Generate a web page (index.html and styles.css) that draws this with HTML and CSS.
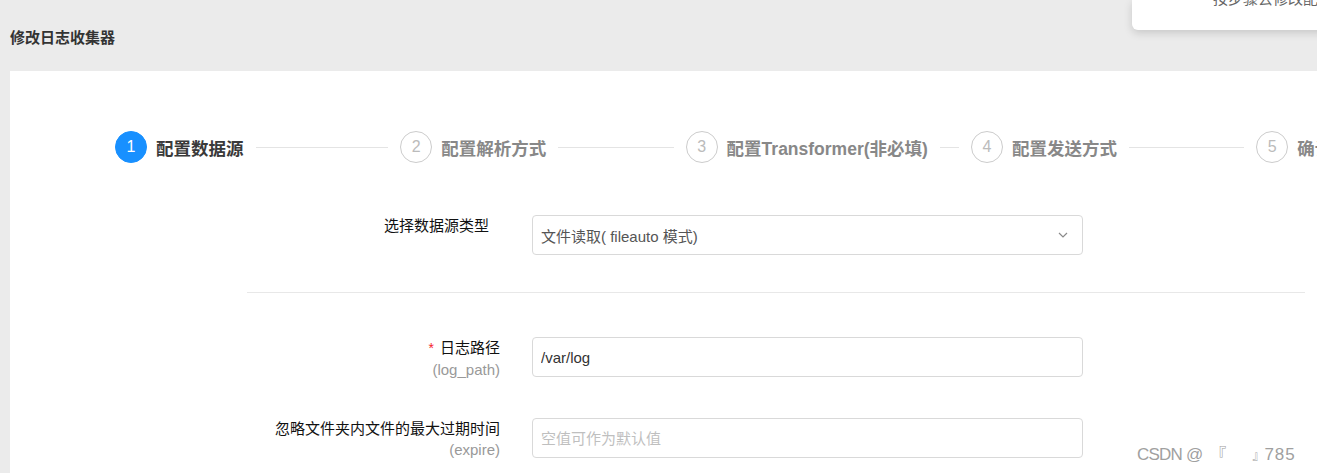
FILE: index.html
```html
<!DOCTYPE html>
<html lang="zh">
<head>
    <meta charset="UTF-8">
    <title>修改日志收集器</title>
    <link rel="stylesheet" href="styles.css">
</head>
<body>
    <div class="notice"> <!-- 右上角提示框 -->
        <span class="notice-text">按步骤去修改配置</span>
    </div>
    <div class="page-title">修改日志收集器</div>
    <div class="panel">
        <div class="steps">
            <div class="step active">
                <span class="step-icon">1</span>
                <span class="step-title">配置数据源</span>
                <span class="step-tail"></span>
            </div>
            <div class="step">
                <span class="step-icon">2</span>
                <span class="step-title">配置解析方式</span>
                <span class="step-tail"></span>
            </div>
            <div class="step">
                <span class="step-icon">3</span>
                <span class="step-title">配置Transformer(非必填)</span>
                <span class="step-tail"></span>
            </div>
            <div class="step">
                <span class="step-icon">4</span>
                <span class="step-title">配置发送方式</span>
                <span class="step-tail"></span>
            </div>
            <div class="step">
                <span class="step-icon">5</span>
                <span class="step-title">确认并提交</span>
            </div>
        </div>

        <div class="form">
            <div class="form-row">
                <div class="form-label first">选择数据源类型</div>
                <div class="select">
                    <span>文件读取( fileauto 模式)</span>
                    <svg class="arrow" width="10" height="6" viewBox="0 0 10 6">
                        <polyline points="1,1 5,5 9,1" fill="none" stroke="#8a8a8a" stroke-width="1.2"/>
                    </svg>
                </div>
            </div>
            <div class="divider"></div>
            <div class="form-row">
                <div class="form-label">
                    <div><span class="required">*</span>日志路径</div>
                    <div class="sub">(log_path)</div>
                </div>
                <input class="input" type="text" value="/var/log">
            </div>
            <div class="form-row">
                <div class="form-label">
                    <div>忽略文件夹内文件的最大过期时间</div>
                    <div class="sub">(expire)</div>
                </div>
                <input class="input" type="text" placeholder="空值可作为默认值">
            </div>
        </div>
    </div>
    <div class="watermark">
        <span class="wm-name">CSDN @</span><span class="wm-open">『</span><span class="wm-close">』</span><span class="wm-num">785</span>
    </div>
</body>
</html>
```

FILE: styles.css
```css
html, body {
    overflow: hidden;
}
body {
    margin: 0;
    background-color: #ebebeb;
    font-family: "Liberation Sans", "Noto Sans CJK SC", sans-serif;
    color: #222;
    height: 473px;
}
.page-title {
    padding: 28px 0 0 10px;
    height: 71px;
    box-sizing: border-box;
    font-size: 15px;
    line-height: 20px;
    font-weight: bold;
    color: #333;
}
.panel {
    margin-left: 10px;
    width: 1400px;
    height: 420px;
    background-color: #fff;
    padding-top: 60px;
    box-sizing: border-box;
}
/* 步骤条 */
.steps {
    display: flex;
    margin-left: 105px;
    height: 32px;
}
.step {
    flex: 0 0 285.3px;
    display: flex;
    align-items: center;
    white-space: nowrap;
}
.step-icon {
    width: 32px;
    height: 32px;
    box-sizing: border-box;
    border: 1px solid #ccc;
    border-radius: 50%;
    color: #bbb;
    font-size: 16px;
    display: flex;
    align-items: center;
    justify-content: center;
    flex-shrink: 0;
    margin-right: 9px;
}
.step-title {
    font-size: 17.5px;
    font-weight: bold;
    color: #888;
}
.step-tail {
    flex: 1;
    height: 1px;
    background-color: #e4e4e4;
    margin: 0 12px;
}
.step.active .step-icon {
    background-color: #1890ff;
    border-color: #1890ff;
    color: #fff;
}
.step.active .step-title {
    color: #3a3a3a;
}
/* 表单 */
.form {
    margin: 52px 0 0 237px;
    width: 1058px;
}
.form-row {
    display: flex;
    gap: 32px;
}
.form-row + .form-row {
    margin-top: 38px;
}
.form-label {
    width: 253px;
    text-align: right;
    font-size: 15px;
    line-height: 21px;
    color: #111;
}
.form-label.first {
    padding-right: 11px;
    box-sizing: border-box;
    line-height: 22px;
}
.form-label .sub {
    color: #999;
}
.required {
    color: #f5222d;
    margin-right: 6px;
    font-size: 14px;
}
.select, .input {
    width: 551px;
    height: 40px;
    box-sizing: border-box;
    border: 1px solid #d9d9d9;
    border-radius: 4px;
    padding: 0 8px;
    font-family: inherit;
    font-size: 15px;
    color: #333;
    background-color: #fff;
    outline: none;
}
.select {
    display: flex;
    align-items: center;
    justify-content: space-between;
    color: #555;
    padding-right: 14px;
}
.input::placeholder {
    color: #bfbfbf;
}
.divider {
    height: 1px;
    background-color: #e8e8e8;
    margin: 37px 0 44px;
}
/* 右上角提示 */
.notice {
    position: absolute;
    top: 0;
    left: 1132px;
    width: 260px;
    height: 30px;
    background-color: #fff;
    border-radius: 0 0 6px 6px;
    box-shadow: 0 3px 8px rgba(0, 0, 0, 0.15);
    overflow: hidden;
}
.notice-text {
    position: absolute;
    top: -13px;
    left: 81px;
    font-size: 15px;
    color: #666;
    white-space: nowrap;
}
/* 水印 */
.watermark {
    position: absolute;
    left: 1137px;
    top: 444px;
    display: flex;
    align-items: baseline;
    font-size: 17px;
    line-height: 22px;
    color: #a0a0a0;
    white-space: nowrap;
}
.wm-name {
    letter-spacing: -0.8px;
}
.wm-open {
    margin-left: 8px;
    font-size: 16px;
}
.wm-close {
    margin-left: 26px;
    font-size: 12px;
}
.wm-num {
    letter-spacing: 1px;
}
```
